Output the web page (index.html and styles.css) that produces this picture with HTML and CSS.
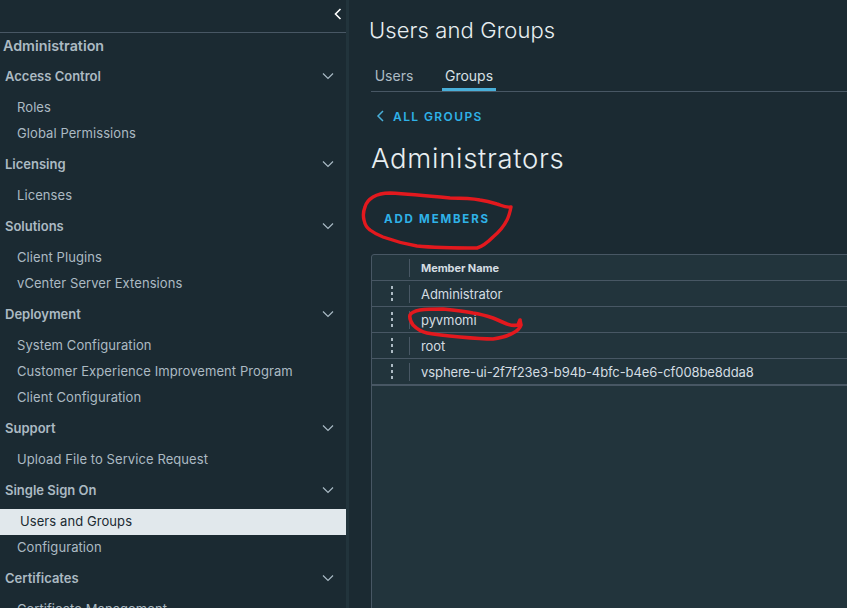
FILE: index.html
```html
<!DOCTYPE html>
<html lang="en">
<head>
<meta charset="utf-8">
<title>Users and Groups</title>
<link rel="stylesheet" href="styles.css">
</head>
<body>
<div class="app">
  <nav class="side">
    <div class="side-top">
      <svg class="collapse" width="10" height="14" viewBox="0 0 10 14"><path d="M7.5 2 L2.5 7 L7.5 12" fill="none" stroke="#fff" stroke-width="1.6"/></svg>
    </div>
    <div class="side-title">Administration</div>
    <div class="sec"><span>Access Control</span><svg class="chev" width="12" height="8" viewBox="0 0 12 8"><path d="M1 1.5 L6 6.5 L11 1.5" fill="none" stroke="#a9bac4" stroke-width="1.2"/></svg></div>
    <a class="item">Roles</a>
    <a class="item">Global Permissions</a>
    <div class="sec"><span>Licensing</span><svg class="chev" width="12" height="8" viewBox="0 0 12 8"><path d="M1 1.5 L6 6.5 L11 1.5" fill="none" stroke="#a9bac4" stroke-width="1.2"/></svg></div>
    <a class="item">Licenses</a>
    <div class="sec"><span>Solutions</span><svg class="chev" width="12" height="8" viewBox="0 0 12 8"><path d="M1 1.5 L6 6.5 L11 1.5" fill="none" stroke="#a9bac4" stroke-width="1.2"/></svg></div>
    <a class="item">Client Plugins</a>
    <a class="item">vCenter Server Extensions</a>
    <div class="sec"><span>Deployment</span><svg class="chev" width="12" height="8" viewBox="0 0 12 8"><path d="M1 1.5 L6 6.5 L11 1.5" fill="none" stroke="#a9bac4" stroke-width="1.2"/></svg></div>
    <a class="item">System Configuration</a>
    <a class="item">Customer Experience Improvement Program</a>
    <a class="item">Client Configuration</a>
    <div class="sec"><span>Support</span><svg class="chev" width="12" height="8" viewBox="0 0 12 8"><path d="M1 1.5 L6 6.5 L11 1.5" fill="none" stroke="#a9bac4" stroke-width="1.2"/></svg></div>
    <a class="item">Upload File to Service Request</a>
    <div class="sec"><span>Single Sign On</span><svg class="chev" width="12" height="8" viewBox="0 0 12 8"><path d="M1 1.5 L6 6.5 L11 1.5" fill="none" stroke="#a9bac4" stroke-width="1.2"/></svg></div>
    <a class="item active">Users and Groups</a>
    <a class="item">Configuration</a>
    <div class="sec"><span>Certificates</span><svg class="chev" width="12" height="8" viewBox="0 0 12 8"><path d="M1 1.5 L6 6.5 L11 1.5" fill="none" stroke="#a9bac4" stroke-width="1.2"/></svg></div>
    <a class="item">Certificate Management</a>
  </nav>
  <div class="gutter"></div>
  <main class="main">
    <h1 class="title">Users and Groups</h1>
    <div class="tabs">
      <span class="tab">Users</span>
      <span class="tab on">Groups</span>
    </div>
    <div class="back">
      <svg width="9" height="12" viewBox="0 0 9 12"><path d="M7 1 L2 6 L7 11" fill="none" stroke="#49afd9" stroke-width="1.5"/></svg>
      <span>ALL GROUPS</span>
    </div>
    <h2 class="name">Administrators</h2>
    <div class="action">ADD MEMBERS</div>
    <div class="grid">
      <div class="row head"><span class="cell-act"></span><span class="cell-name">Member Name</span></div>
      <div class="row"><span class="cell-act"><i></i><i></i><i></i></span><span class="cell-name">Administrator</span></div>
      <div class="row"><span class="cell-act"><i></i><i></i><i></i></span><span class="cell-name">pyvmomi</span></div>
      <div class="row"><span class="cell-act"><i></i><i></i><i></i></span><span class="cell-name">root</span></div>
      <div class="row last"><span class="cell-act"><i></i><i></i><i></i></span><span class="cell-name">vsphere-ui-2f7f23e3-b94b-4bfc-b4e6-cf008be8dda8</span></div>
    </div>
  </main>
</div>
<svg class="ink" width="847" height="608" viewBox="0 0 847 608">
  <path d="M511 207 C505 208 501 205 497 204 C490 202 486 201 480 200 C470 198 460 198 450 198 C430 196 410 194 390 193 C382 193 378 194 373 197 C368 200 366 203 365 207 C363 212 363 216 364 220 C365 225 367 228 370 230 C374 233 378 235 383 237 C394 241 405 244 417 246 C437 248 457 248 477 248 C484 246 489 241 493 237 C499 232 504 226 507 220 C509 216 510 212 511 207" fill="none" stroke="#e3191e" stroke-width="3.4" stroke-linecap="round" stroke-linejoin="round"/>
  <path d="M520 320 L518 325 C514 326 510 325 507 324 C502 322 498 320 493 318 C487 316 480 314 473 313 C463 311 453 310 443 309 C435 309 427 309 420 310 C415 311 411 313 410 315 C409 319 411 322 413 325 C417 329 422 332 427 333 C438 335 449 336 460 337 C471 338 482 339 493 339 C501 338 508 336 513 333 C517 331 520 328 521 325 L520 320" fill="none" stroke="#e3191e" stroke-width="3.6" stroke-linecap="round" stroke-linejoin="round"/>
</svg>
</body>
</html>
```

FILE: styles.css
```css
* { box-sizing: border-box; }
html, body { margin: 0; height: 100%; overflow: hidden; }
body {
  background: #1b2a32;
  font-family: Inter, "Open Sans", "Liberation Sans", sans-serif;
  font-size: 13px;
  color: #c5d1d8;
}
.app { display: flex; height: 608px; width: 847px; overflow: hidden; }
.side { width: 346px; flex: none; background: #1b2a32; overflow: hidden; }
.side-top {
  height: 33px;
  border-bottom: 1px solid #485764;
  display: flex;
  justify-content: flex-end;
  align-items: center;
  padding: 0 3px 5px 0;
}
.side-title { height: 26px; line-height: 26px; padding-left: 3px; font-size: 14.3px; font-weight: 600; color: #acbac3; }
.sec {
  height: 36px;
  display: flex;
  align-items: center;
  justify-content: space-between;
  padding: 0 12px 3px 5px;
  font-size: 13px;
  font-weight: 600;
  color: #acbac3;
}
.item { display: block; height: 26px; line-height: 25px; padding-left: 17px; color: #acbac3; white-space: nowrap; letter-spacing: 0.08px; }
.item.active { background: #e1e8ec; color: #1b2a32; padding-left: 20px; }
.gutter { width: 25px; flex: none; background: linear-gradient(to right, #22343c 0 3px, #1b2a32 3px); }
.main { flex: 1; min-width: 0; background: #1b2a32; position: relative; }
.title { margin: 0 0 0 -2px; height: 60px; padding-top: 16px; font-size: 22px; line-height: 28px; font-weight: 300; letter-spacing: 0.1px; color: #e8eef1; }
.tabs { height: 32px; display: flex; border-bottom: 1px solid #485764; gap: 8px; }
.tab { width: 54px; text-align: center; line-height: 32px; font-size: 14px; color: #adbbc4; }
.tab:first-child { width: 46px; }
.tab.on { color: #d7e0e5; box-shadow: inset 0 -3px 0 #49afd9; margin-left: 17px; }
.back { display: flex; align-items: center; gap: 8px; height: 48px; padding-left: 5px; font-size: 12px; font-weight: 600; letter-spacing: 1.4px; color: #2fb2e8; }
.name { margin: 0; height: 36px; font-size: 27.5px; line-height: 36px; font-weight: 300; letter-spacing: 0.7px; color: #e8eef1; }
.action { margin-top: 33px; height: 20px; line-height: 20px; padding-left: 13px; font-size: 11.5px; font-weight: 700; letter-spacing: 1.8px; color: #2fb2e8; }
.grid { margin-top: 25px; height: 400px; width: 520px; background: #22343c; border: 1px solid #485764; border-radius: 3px 0 0 0; }
.row { display: flex; height: 26px; align-items: center; border-bottom: 1px solid #485764; }
.row.last { border-bottom-width: 2px; height: 27px; }
.head { font-size: 11px; font-weight: 700; color: #c5d1d8; }
.cell-act { width: 38px; height: 18px; flex: none; border-right: 1px solid #485764; display: flex; flex-direction: column; align-items: center; justify-content: center; gap: 3px; padding-left: 2px; }
.cell-act i { display: block; width: 2px; height: 3px; background: #acbac3; }
.cell-name { padding-left: 11px; color: #d4dde2; white-space: nowrap; letter-spacing: -0.08px; }
.ink { position: absolute; left: 0; top: 0; pointer-events: none; }
```
